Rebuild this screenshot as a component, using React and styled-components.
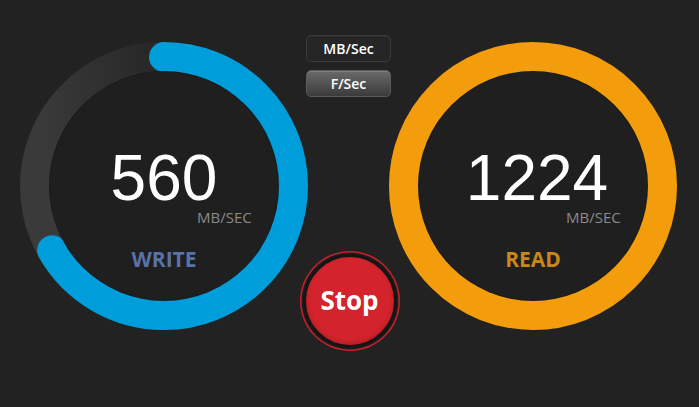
import React from 'react';
import styled, {createGlobalStyle} from 'styled-components';

const GlobalStyle = createGlobalStyle`
    html, body {
        margin: 0;
        padding: 0;
        background: #222222;
    }
    body {
        width: 699px;
        height: 407px;
        overflow: hidden;
        font-family: "Open Sans", "Liberation Sans", sans-serif;
    }
`

const Screen = styled.div`
    display: flex;
    align-items: flex-start;
    width: 699px;
    height: 407px;
    padding: 35px 0 0 20px;
    box-sizing: border-box;
    background: #222222;
`

const Dial = styled.div`
    display: grid;
    width: 288px;
    height: 288px;
    margin-top: 7px;
    flex-shrink: 0;
    > * {
        grid-area: 1 / 1;
    }
`

const Face = styled.div`
    place-self: center;
    width: 228px;
    height: 228px;
    border-radius: 50%;
    background: #1f1f1f;
    box-shadow: 0 0 0 1px #1b1b1b;
    display: flex;
    flex-direction: column;
    align-items: center;
    padding-top: 75px;
    box-sizing: border-box;
`

const Value = styled.div`
    font-family: "Liberation Sans", Arial, sans-serif;
    font-size: 64px;
    line-height: 63px;
    color: #ffffff;
    padding-left: ${p => p.nudge || 0}px;
`

const Unit = styled.div`
    align-self: stretch;
    padding-left: calc(50% + 33px);
    font-size: 15px;
    line-height: 15px;
    color: #8a8a8a;
`

const Label = styled.div`
    margin-top: 24px;
    font-size: 21px;
    line-height: 21px;
    font-weight: 700;
    color: ${p => p.color};
`

const Middle = styled.div`
    width: 81px;
    height: 313px;
    flex-shrink: 0;
    display: flex;
    flex-direction: column;
    align-items: center;
    gap: 8px;
`

const ModeButton = styled.button`
    width: 85px;
    height: 27px;
    flex-shrink: 0;
    border-radius: 5px;
    border: 1px solid ${p => p.active ? '#5a5a5a' : '#3b3b3b'};
    background: ${p => p.active
        ? 'linear-gradient(#6a6a6a, #3b3b3b)'
        : '#262626'};
    color: #ffffff;
    font-family: "Open Sans", sans-serif;
    font-size: 14px;
    font-weight: 600;
    padding: 0;
    box-shadow: inset 0 1px 0 rgba(255, 255, 255, ${p => p.active ? 0.15 : 0.04});
`

const StopButton = styled.button`
    margin-top: auto;
    flex-shrink: 0;
    width: 94px;
    height: 94px;
    border-radius: 50%;
    border: 3px solid #151515;
    background: #d3232c;
    box-shadow: 0 0 0 1.5px #1e1e1e, 0 0 0 3px #c6202a, inset 0 -2px 4px rgba(0, 0, 0, 0.15);
    color: #ffffff;
    font-family: "Open Sans", sans-serif;
    font-size: 26px;
    font-weight: 700;
    padding: 0 0 2px 0;
    transform: translateX(1px);
`

function Ring({id, color, fraction}) {
    const r = 129;
    const len = 2 * Math.PI * r;
    return (
        <svg width="288" height="288" viewBox="0 0 288 288">
            <defs>
                <linearGradient id={id} x1="0" y1="0.1" x2="1" y2="0">
                    <stop offset="0" stopColor="#3a3a3a"/>
                    <stop offset="0.45" stopColor="#282828"/>
                    <stop offset="1" stopColor="#262626"/>
                </linearGradient>
            </defs>
            <circle cx="144" cy="144" r={r} fill="none" stroke={`url(#${id})`} strokeWidth="30"/>
            <circle
                cx="144" cy="144" r={r}
                fill="none"
                stroke={color}
                strokeWidth="30"
                strokeLinecap={fraction < 1 ? 'round' : 'butt'}
                strokeDasharray={`${len * fraction} ${len}`}
                transform="rotate(-90 144 144)"
            />
        </svg>
    );
}

function Gauge({id, value, nudge, label, color, labelColor, fraction}) {
    return (
        <Dial>
            <Ring id={id} color={color} fraction={fraction}/>
            <Face>
                <Value nudge={nudge}>{value}</Value>
                <Unit>MB/SEC</Unit>
                <Label color={labelColor}>{label}</Label>
            </Face>
        </Dial>
    );
}

export default function App() {
    return (
        <>
            <GlobalStyle/>
            <Screen>
                <Gauge id="g-write" value="560" label="WRITE" color="#009ddb" labelColor="#5a72a6" fraction={240 / 360}/>
                <Middle>
                    <ModeButton>MB/Sec</ModeButton>
                    <ModeButton active>F/Sec</ModeButton>
                    <StopButton>Stop</StopButton>
                </Middle>
                <Gauge id="g-read" value="1224" nudge={8} label="READ" color="#f39c0c" labelColor="#c8871b" fraction={1}/>
            </Screen>
        </>
    );
}
